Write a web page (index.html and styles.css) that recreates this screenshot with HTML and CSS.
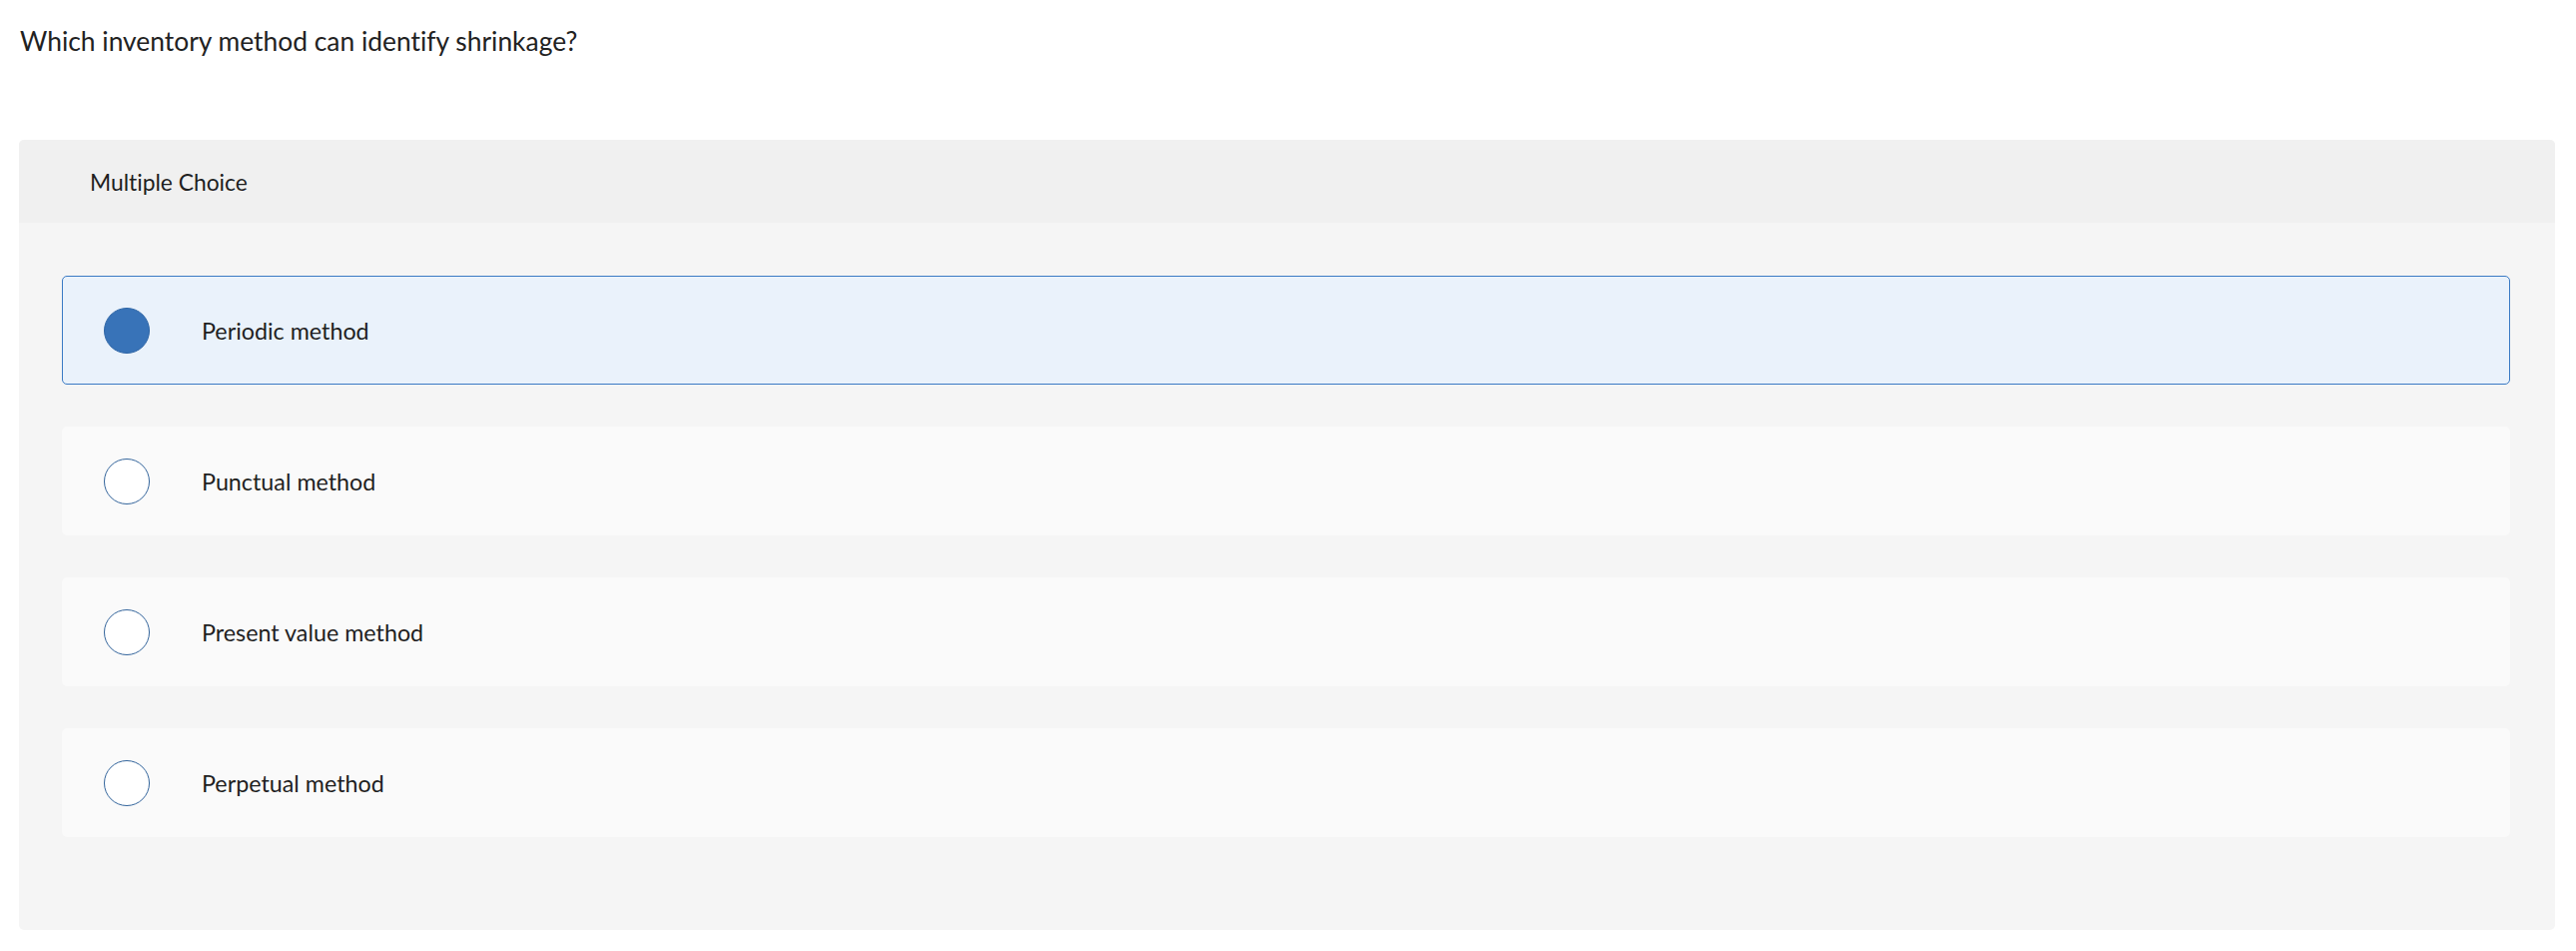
FILE: index.html
```html
<!DOCTYPE html>
<html lang="en">
<head>
<meta charset="utf-8">
<title>Multiple Choice</title>
<link rel="stylesheet" href="styles.css">
</head>
<body>
  <p class="question">Which inventory method can identify shrinkage?</p>
  <section class="panel">
    <header class="panel-head">Multiple Choice</header>
    <div class="choices">
      <label class="choice selected">
        <span class="radio"></span>
        <span class="choice-text">Periodic method</span>
      </label>
      <label class="choice">
        <span class="radio"></span>
        <span class="choice-text">Punctual method</span>
      </label>
      <label class="choice">
        <span class="radio"></span>
        <span class="choice-text">Present value method</span>
      </label>
      <label class="choice">
        <span class="radio"></span>
        <span class="choice-text">Perpetual method</span>
      </label>
    </div>
  </section>
</body>
</html>
```
FILE: styles.css
```css
html, body {
  margin: 0;
  padding: 0;
  background: #ffffff;
}

body {
  font-family: Lato, "Open Sans", "Liberation Sans", sans-serif;
  font-variant-ligatures: none;
  color: #1f1f1f;
  padding: 0 21px 0 19px;
}

.question {
  margin: 0;
  padding: 17px 0 0 1px;
  font-size: 26.4px;
  line-height: 48px;
  height: 123px;
  color: #222;
}

.panel {
  background: #f5f5f5;
  border-radius: 5px;
  overflow: hidden;
}

.panel-head {
  background: #f0f0f0;
  height: 83px;
  display: flex;
  align-items: center;
  padding-left: 71px;
  font-size: 22.8px;
  color: #1f1f1f;
}

.choices {
  display: flex;
  flex-direction: column;
  gap: 42px;
  padding: 53px 45px 93px 43px;
}

.choice {
  display: flex;
  align-items: center;
  height: 109px;
  box-sizing: border-box;
  background: #fafafa;
  border: 1px solid transparent;
  border-radius: 5px;
  padding-left: 41px;
}

.choice.selected {
  background: #eaf2fb;
  border-color: #3a7ac4;
}

.radio {
  width: 46px;
  height: 46px;
  box-sizing: border-box;
  border-radius: 50%;
  border: 1.5px solid #34659c;
  background: #ffffff;
  flex: none;
}

.choice.selected .radio {
  background: #3873b8;
  border-color: #2f66a6;
}

.choice-text {
  margin-left: 52px;
  font-size: 23.3px;
  color: #1f1f1f;
}
```
